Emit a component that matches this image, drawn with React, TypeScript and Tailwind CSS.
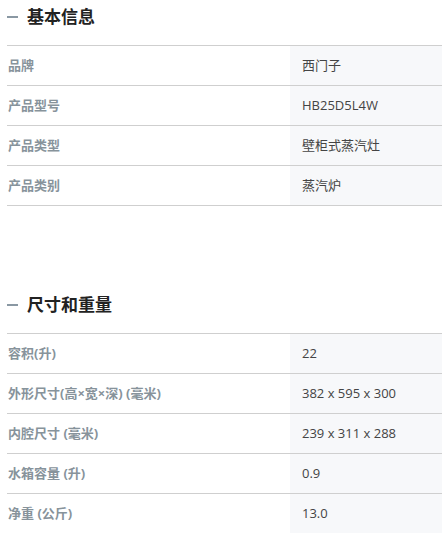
import React from 'react';

const sections = [
  {
    title: '基本信息',
    rows: [
      ['品牌', '西门子'],
      ['产品型号', 'HB25D5L4W'],
      ['产品类型', '壁柜式蒸汽灶'],
      ['产品类别', '蒸汽炉'],
    ],
  },
  {
    title: '尺寸和重量',
    rows: [
      ['容积(升)', '22'],
      ['外形尺寸(高×宽×深) (毫米)', '382 x 595 x 300'],
      ['内腔尺寸 (毫米)', '239 x 311 x 288'],
      ['水箱容量 (升)', '0.9'],
      ['净重 (公斤)', '13.0'],
    ],
  },
];

function SpecSection({ title, rows }: { title: string; rows: string[][] }) {
  return (
    <section>
      <h2 className="flex h-[45px] items-center gap-[9px] pb-[11px] text-[17px] font-bold text-[#222]">
        <span className="block h-[2px] w-[11px] bg-[#8a98a3]" />
        {title}
      </h2>
      <div className="border-t border-[#cfcfcf]">
        {rows.map(([label, value]) => (
          <div key={label} className="flex h-[40px] border-b border-[#cfcfcf]">
            <div className="flex w-[283px] items-center pl-[1px] text-[13px] font-bold text-[#87939b]">
              {label}
            </div>
            <div className="flex flex-1 items-center bg-[#f7f8fa] pl-[12px] text-[13px] text-[#444]">
              {value}
            </div>
          </div>
        ))}
      </div>
    </section>
  );
}

export default function App() {
  return (
    <div
      className="w-[443px] bg-white pl-[7px] pr-[1px]"
      style={{ fontFamily: '"Open Sans", "Noto Sans CJK SC", sans-serif' }}
    >
      <div className="flex flex-col gap-[82px]">
        {sections.map((s) => (
          <SpecSection key={s.title} title={s.title} rows={s.rows} />
        ))}
      </div>
    </div>
  );
}
